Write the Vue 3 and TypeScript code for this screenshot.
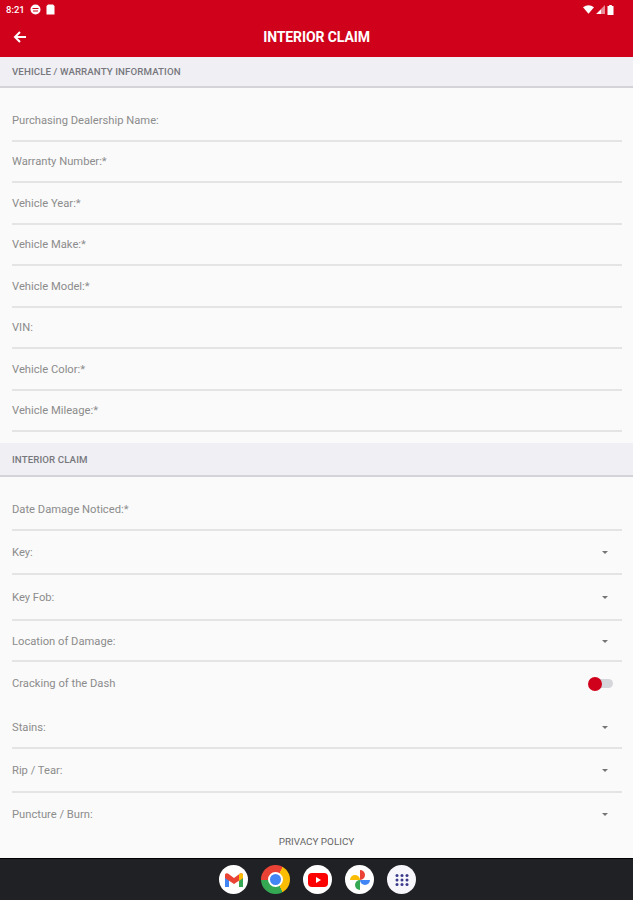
<script setup lang="ts">
interface Row { label: string; h: number; kind?: 'select' | 'toggle' }
const vehicle: Row[] = [
  { label: 'Purchasing Dealership Name:', h: 41.5 },
  { label: 'Warranty Number:*', h: 41.5 },
  { label: 'Vehicle Year:*', h: 41.5 },
  { label: 'Vehicle Make:*', h: 41.5 },
  { label: 'Vehicle Model:*', h: 41.5 },
  { label: 'VIN:', h: 41.5 },
  { label: 'Vehicle Color:*', h: 41.5 },
  { label: 'Vehicle Mileage:*', h: 41.5 },
]
const claim: Row[] = [
  { label: 'Date Damage Noticed:*', h: 41.5 },
  { label: 'Key:', h: 44, kind: 'select' },
  { label: 'Key Fob:', h: 46, kind: 'select' },
  { label: 'Location of Damage:', h: 41, kind: 'select' },
  { label: 'Cracking of the Dash', h: 44, kind: 'toggle' },
  { label: 'Stains:', h: 43, kind: 'select' },
  { label: 'Rip / Tear:', h: 44, kind: 'select' },
  { label: 'Puncture / Burn:', h: 44, kind: 'select' },
]
const dots = [0, 1, 2, 3, 4, 5, 6, 7, 8]
</script>

<template>
  <div class="screen">
    <header class="top">
      <div class="status">
        <div class="status-left">
          <span class="time">8:21</span>
          <svg width="11" height="11" viewBox="0 0 11 11"><circle cx="5.5" cy="5.5" r="5" fill="#fff" /><path d="M2.5 4.5h6M3 7h5" stroke="#d0021b" stroke-width="1.2" /></svg>
          <svg width="9" height="11" viewBox="0 0 9 11"><path d="M2 0.5h5l1.5 1.5v8.5h-8V2z" fill="#fff" /></svg>
        </div>
        <div class="status-right">
          <svg width="11" height="9" viewBox="0 0 11 9"><path d="M0 2.2Q5.5-1.6 11 2.2L5.5 8.8z" fill="#fff" /></svg>
          <svg width="9" height="9" viewBox="0 0 9 9"><path d="M9 0v9H0z" fill="#fff" fill-opacity=".55" /><path d="M5 4.5v4.500H0.500z" fill="#fff" /></svg>
          <svg width="7" height="10" viewBox="0 0 7 10"><path d="M2.200 0h2.600v1H6.500v9H0.500V1H2.200z" fill="#fff" /></svg>
        </div>
      </div>
      <div class="appbar">
        <svg class="back" width="14" height="14" viewBox="0 0 14 14"><path d="M13 7H2.500M7 2L2 7l5 5" fill="none" stroke="#fff" stroke-width="2" /></svg>
        <h1>INTERIOR CLAIM</h1>
      </div>
    </header>

    <main class="content">
      <div class="section first">VEHICLE / WARRANTY INFORMATION</div>
      <div class="rows-first">
        <div v-for="r in vehicle" :key="r.label" class="row" :style="{ height: r.h + 'px' }"><span>{{ r.label }}</span></div>
      </div>
      <div class="section second">INTERIOR CLAIM</div>
      <div class="rows-second">
        <div v-for="r in claim" :key="r.label" class="row" :class="{ plain: r.kind === 'toggle' }" :style="{ height: r.h + 'px' }">
          <span>{{ r.label }}</span>
          <i v-if="r.kind === 'select'" class="caret"></i>
          <div v-if="r.kind === 'toggle'" class="toggle"><b></b></div>
        </div>
      </div>
      <div class="privacy">PRIVACY POLICY</div>
    </main>

    <footer class="dock">
      <div class="app">
        <svg width="18" height="14" viewBox="0 0 18 14"><path d="M0 1.500V14h4V5z" fill="#4285f4" /><path d="M14 5v9h4V1.500z" fill="#34a853" /><path d="M0 1.500Q1-.5 3 .5L9 5l6-4.500q2-1 3 1V5L9 11 0 5z" fill="#ea4335" /><path d="M14 1.250l1-.75q2-1 3 1V5l-4 3z" fill="#fbbc04" /></svg>
      </div>
      <div class="app chrome"><span></span></div>
      <div class="app">
        <svg width="20" height="14" viewBox="0 0 20 14"><rect width="20" height="14" rx="4" fill="#f00" /><path d="M8 4l5 3-5 3z" fill="#fff" /></svg>
      </div>
      <div class="app">
        <svg width="22" height="22" viewBox="0 0 22 22">
          <path d="M11 11H1a5 5 0 0 1 10 0z" fill="#fbbc04" />
          <path d="M11 11V1a5 5 0 0 1 0 10z" fill="#ea4335" />
          <path d="M11 11h10a5 5 0 0 1-10 0z" fill="#4285f4" />
          <path d="M11 11v10a5 5 0 0 1 0-10z" fill="#34a853" />
        </svg>
      </div>
      <div class="app launcher">
        <svg width="14" height="12" viewBox="0 0 14 12">
          <circle v-for="n in dots" :key="n" :cx="2 + (n % 3) * 5" :cy="1.500 + Math.floor(n / 3) * 4.500" r="1.500" fill="#3c3a8c" />
        </svg>
      </div>
    </footer>
  </div>
</template>

<style>
html, body { margin: 0; background: #fafafa; }
</style>

<style scoped>
.screen {
  width: 633px;
  height: 900px;
  display: flex;
  flex-direction: column;
  overflow: hidden;
  font-family: Roboto, "Liberation Sans", sans-serif;
  background: #fafafa;
}
.top {
  height: 57px;
  flex: none;
  background: #d0021b;
  color: #fff;
  box-shadow: 0 1px 2px rgba(0,0,0,.25);
  position: relative;
}
.status {
  height: 19px;
  padding: 0 18px 0 6px;
  display: flex;
  justify-content: space-between;
  align-items: center;
}
.status-left, .status-right { display: flex; align-items: center; gap: 5px; }
.status-right { gap: 2px; margin-right: 1px; }
.time { font-size: 9.500px; font-weight: 500; }
.appbar {
  height: 38px;
  display: flex;
  align-items: center;
  justify-content: center;
  position: relative;
}
.back { position: absolute; left: 13px; top: 11px; }
h1 { margin: 0 0 2px; font-size: 14px; font-weight: 700; letter-spacing: -.1px; }
.content {
  flex: 1;
  position: relative;
  overflow: hidden;
}
.section {
  background: #efeff4;
  border-bottom: 2px solid #d4d4d8;
  box-sizing: border-box;
  padding: 0 12px;
  display: flex;
  align-items: center;
  font-size: 9.700px;
  font-weight: 500;
  color: #77777c;
  letter-spacing: .1px;
}
.section.first { height: 31px; padding-bottom: 1px; }
.section.second { height: 34px; margin-top: 11px; padding-top: 1px; }
.rows-first { padding-top: 12px; }
.rows-first .row { padding-top: 1px; }
.rows-second .row { padding-top: 2px; }
.row {
  margin: 0 11px 0 12px;
  box-sizing: border-box;
  border-bottom: 2px solid #e4e4e4;
  display: flex;
  align-items: center;
  justify-content: space-between;
  font-size: 11.200px;
  color: #8c8c8c;
}
.row.plain { border-bottom-color: transparent; }
.rows-second { margin-top: 12px; }
.caret {
  width: 0;
  height: 0;
  border-left: 3.500px solid transparent;
  border-right: 3.500px solid transparent;
  border-top: 3.500px solid #757575;
  margin-right: 14px;
}
.toggle {
  width: 23px;
  height: 9px;
  border-radius: 5px;
  background: #d5d5dc;
  position: relative;
  margin-right: 9px;
}
.toggle b {
  position: absolute;
  left: -2px;
  top: -2.500px;
  width: 14px;
  height: 14px;
  border-radius: 50%;
  background: #d0021b;
}
.privacy {
  position: absolute;
  left: 0;
  right: 0;
  bottom: 0;
  height: 28px;
  padding-top: 6px;
  box-sizing: border-box;
  background: #fafafa;
  text-align: center;
  font-size: 9.900px;
  font-weight: 400;
  color: #666;
}
.dock {
  height: 42px;
  flex: none;
  background: #202124;
  border-top: 1px solid #000;
  box-sizing: border-box;
  padding-left: 2px;
  display: flex;
  justify-content: center;
  align-items: center;
  gap: 13px;
}
.app {
  width: 29px;
  height: 29px;
  border-radius: 50%;
  background: #fff;
  display: flex;
  align-items: center;
  justify-content: center;
}
.chrome {
  background: conic-gradient(from 30deg, #fbbc04 0 120deg, #34a853 120deg 240deg, #ea4335 240deg 360deg);
}
.chrome span {
  width: 15px;
  height: 15px;
  border-radius: 50%;
  background: #4285f4;
  border: 2.500px solid #fff;
  box-sizing: border-box;
}
.launcher { background: #f6f6fb; }
</style>
